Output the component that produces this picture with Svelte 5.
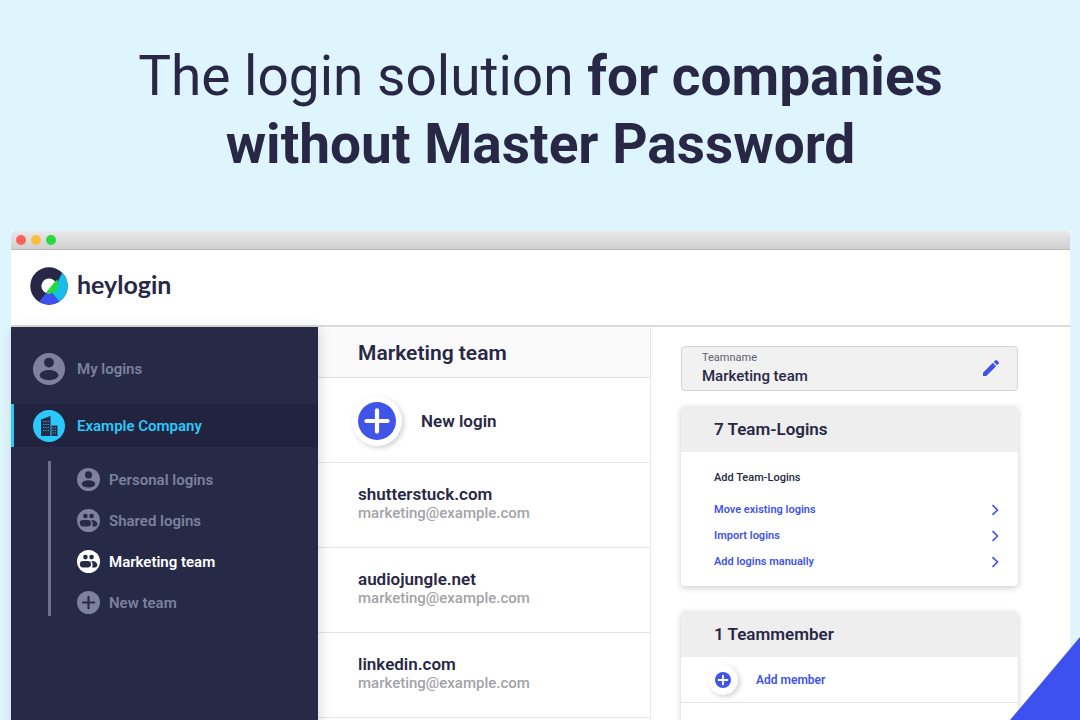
<script lang="ts">
	type IconName = 'person' | 'group' | 'plus';

	interface Team {
		label: string;
		icon: IconName;
		active?: boolean;
	}

	const teams: Team[] = [
		{ label: 'Personal logins', icon: 'person' },
		{ label: 'Shared logins', icon: 'group' },
		{ label: 'Marketing team', icon: 'group', active: true },
		{ label: 'New team', icon: 'plus' }
	];

	const logins = [
		{ site: 'shutterstuck.com', user: 'marketing@example.com' },
		{ site: 'audiojungle.net', user: 'marketing@example.com' },
		{ site: 'linkedin.com', user: 'marketing@example.com' }
	];

	const actions = ['Move existing logins', 'Import logins', 'Add logins manually'];

	let teamname = $state('Marketing team');
</script>

{#snippet icon(name: IconName)}
	<svg class="icon" viewBox="0 0 24 24" aria-hidden="true">
		<circle cx="12" cy="12" r="12" fill="currentColor" />
		{#if name === 'person'}
			<circle class="cut" cx="12" cy="7.2" r="3.7" />
			<ellipse class="cut" cx="12" cy="16.6" rx="7" ry="3.8" />
		{:else if name === 'group'}
			<circle class="cut" cx="8.8" cy="7.4" r="2.4" />
			<circle class="cut" cx="15.2" cy="7.4" r="2.4" />
			<rect class="cut" x="3" y="11.6" width="11.6" height="6.6" rx="3.3" />
			<path class="cut" d="M14.6 11.6c3.8 0 6.6 1.400 6.600 4 0 1.600-1 2.600-2.400 2.600h-3.200c.5-.8.7-1.700.7-2.700 0-1.600-.5-2.900-1.700-3.900z" />
		{:else}
			<path d="M12 6v12M6 12h12" stroke="#262a47" stroke-width="2.2" stroke-linecap="round" />
		{/if}
	</svg>
{/snippet}

{#snippet plus()}
	<svg viewBox="0 0 36 36" aria-hidden="true">
		<circle cx="18" cy="18" r="18" fill="#4154e8" />
		<path d="M18 8v20M8 18h20" stroke="#fff" stroke-width="4" stroke-linecap="round" />
	</svg>
{/snippet}

<div class="page">
	<h1>The login solution <b>for companies<br />without Master Password</b></h1>

	<div class="window">
		<div class="titlebar">
			<span class="dot red"></span>
			<span class="dot yellow"></span>
			<span class="dot green"></span>
		</div>

		<header>
			<svg class="logo" viewBox="0 0 38 38" aria-hidden="true">
				<circle cx="19" cy="19" r="18.7" fill="#282846" />
				<path d="M32.2 5.8A18.700 18.700 0 0 1 29.200 34.700L22 26z" fill="#18bdf0" />
				<path d="M29.200 34.700A18.700 18.700 0 0 1 9 34.800L15.800 26.200h6.600z" fill="#3d50f0" />
				<circle cx="19" cy="19" r="7.6" fill="#fff" />
				<path d="M26.600 12.600 15.600 26.300H23A9 9 0 0 0 26.600 12.600z" fill="#1fdc3f" />
			</svg>
			<span class="brand">heylogin</span>
		</header>

		<div class="columns">
			<nav>
				<a class="account" href="#my">
					{@render icon('person')}
					My logins
				</a>
				<a class="account active" href="#company">
					<svg class="icon" viewBox="0 0 32 32" aria-hidden="true">
						<circle cx="16" cy="16" r="16" fill="#2bc8fc" />
						<path d="M8 9.500 17.500 6v20H8zM18.500 15.500h6V26h-6z" fill="#262a47" />
						<path
							d="M10 11.500h6M10 14.500h6M10 17.500h6M10 20.500h6M19.500 18h4M19.500 20.500h4M19.500 23h4"
							stroke="#2bc8fc"
							stroke-width="0.8"
							stroke-dasharray="1.3 1"
						/>
					</svg>
					Example Company
				</a>
				<ul>
					{#each teams as team}
						<li>
							<a class:current={team.active} href="#team">
								{@render icon(team.icon)}
								{team.label}
							</a>
						</li>
					{/each}
				</ul>
			</nav>

			<main>
				<h2>Marketing team</h2>
				<button class="new-login">
					<span class="round">{@render plus()}</span>
					New login
				</button>
				{#each logins as login}
					<a class="login" href="#login">
						<strong>{login.site}</strong>
						<span>{login.user}</span>
					</a>
				{/each}
			</main>

			<aside>
				<div class="field">
					<div class="field-text">
						<label for="teamname">Teamname</label>
						<input id="teamname" type="text" bind:value={teamname} />
					</div>
					<button class="edit" aria-label="Edit">
						<svg viewBox="3 3 18 18" aria-hidden="true">
							<path
								fill="#4154e8"
								d="M3 17.250V21h3.750L17.810 9.940l-3.750-3.750L3 17.250zM20.710 7.040a1 1 0 0 0 0-1.410l-2.340-2.340a1 1 0 0 0-1.410 0l-1.830 1.830 3.750 3.750 1.830-1.830z"
							/>
						</svg>
					</button>
				</div>

				<section>
					<h3>7 Team-Logins</h3>
					<div class="actions">
						<h4>Add Team-Logins</h4>
						{#each actions as action}
							<a href="#action">
								{action}
								<svg viewBox="0 0 8 12" aria-hidden="true">
									<path d="M1.500 1.200 6.500 6l-5 4.800" fill="none" stroke="#4154e8" stroke-width="1.6" />
								</svg>
							</a>
						{/each}
					</div>
				</section>

				<section>
					<h3>1 Teammember</h3>
					<button class="add-member">
						<span class="round small">{@render plus()}</span>
						Add member
					</button>
					<div class="member"></div>
				</section>
			</aside>
		</div>
	</div>

	<div class="corner"></div>
</div>

<style>
	:global(body) {
		margin: 0;
	}

	.page {
		position: relative;
		display: flex;
		flex-direction: column;
		box-sizing: border-box;
		height: 100vh;
		padding: 42px 10px 0 11px;
		overflow: hidden;
		background: #dff5fe;
		color: #282846;
		font-family: Roboto, sans-serif;
	}

	h1,
	h2,
	h3,
	h4,
	ul {
		margin: 0;
		padding: 0;
	}

	a {
		color: inherit;
		text-decoration: none;
	}

	button {
		border: 0;
		background: none;
		color: inherit;
		font: inherit;
		cursor: pointer;
	}

	svg {
		display: block;
		flex: none;
	}

	h1 {
		margin-bottom: 53px;
		font-size: 55px;
		font-weight: 400;
		line-height: 68px;
		text-align: center;
	}

	.window {
		display: flex;
		flex: 1;
		flex-direction: column;
		background: #fff;
	}

	.titlebar {
		display: flex;
		align-items: center;
		gap: 5px;
		height: 18px;
		padding-left: 5px;
		border-bottom: 1px solid #b9b9b9;
		border-radius: 4px 4px 0 0;
		background: linear-gradient(#e8e8e8, #d0d0d0);
	}

	.dot {
		width: 10px;
		height: 10px;
		border-radius: 50%;
	}

	.red {
		background: #fa625c;
	}

	.yellow {
		background: #fbbe3c;
	}

	.green {
		background: #28d940;
	}

	header {
		display: flex;
		align-items: center;
		gap: 9px;
		height: 72px;
		padding: 0 19px 3px;
		border-bottom: 2px solid #dcdcdc;
	}

	.logo {
		width: 38px;
		height: 38px;
	}

	.brand {
		padding-bottom: 5px;
		font-family: Lato, sans-serif;
		font-size: 25px;
		font-weight: 700;
	}

	.columns {
		display: grid;
		flex: 1;
		grid-template-columns: 307px 333px 1fr;
	}

	nav {
		z-index: 1;
		padding-top: 7px;
		background: #262a47;
		box-shadow: 2px 2px 12px rgba(0, 0, 0, 0.15);
		color: #7c819c;
		font-size: 15px;
		font-weight: 600;
	}

	.cut {
		fill: #262a47;
	}

	.account {
		display: flex;
		align-items: center;
		gap: 12px;
		height: 43px;
		margin-bottom: 14px;
		padding: 0 19px;
		border-left: 3px solid transparent;
	}

	.account:first-child {
		margin-top: 13px;
	}

	.account .icon {
		width: 32px;
		height: 32px;
	}

	.account.active {
		border-color: #2bc8fc;
		background: #22233e;
		color: #2bc8fc;
	}

	ul {
		display: grid;
		gap: 18px;
		margin-left: 37px;
		padding: 7px 0 2px 26px;
		border-left: 3px solid #6c708a;
		list-style: none;
	}

	li a {
		display: flex;
		align-items: center;
		gap: 9px;
	}

	li .icon {
		width: 23px;
		height: 23px;
	}

	.current {
		color: #fff;
	}

	main {
		border-right: 1px solid #e6e6e6;
	}

	h2 {
		padding: 2px 0 0 40px;
		border-bottom: 1px solid #dedede;
		background: #fafafa;
		font-size: 21px;
		font-weight: 600;
		line-height: 48px;
	}

	.new-login {
		display: flex;
		align-items: center;
		gap: 19px;
		width: 100%;
		height: 85px;
		padding: 2px 34px 0;
		border-bottom: 1px solid #e6e6e6;
		font-size: 17px;
		font-weight: 600;
	}

	.round {
		display: grid;
		place-items: center;
		width: 50px;
		height: 50px;
		border-radius: 50%;
		background: #fff;
		box-shadow: 2px 2px 5px rgba(0, 0, 0, 0.18);
	}

	.round svg {
		width: 38px;
		height: 38px;
	}

	.round.small {
		width: 30px;
		height: 30px;
	}

	.round.small svg {
		width: 16px;
		height: 16px;
	}

	.login {
		display: flex;
		flex-direction: column;
		box-sizing: border-box;
		height: 85px;
		padding: 21px 40px;
		border-bottom: 1px solid #e6e6e6;
	}

	.login strong {
		font-size: 17px;
		font-weight: 600;
		line-height: 20px;
	}

	.login span {
		color: #a3a3a8;
		font-size: 15px;
		font-weight: 500;
		line-height: 18px;
	}

	aside {
		display: flex;
		flex-direction: column;
		gap: 25px;
		padding: 19px 52px 0 30px;
	}

	.field {
		display: flex;
		align-items: center;
		justify-content: space-between;
		box-sizing: border-box;
		height: 45px;
		margin-bottom: -10px;
		padding: 0 18px 2px 20px;
		border: 1px solid #d4d4d4;
		border-radius: 4px;
		background: #f1f1f1;
	}

	.field-text {
		display: flex;
		flex: 1;
		flex-direction: column;
	}

	label {
		color: #5c5e74;
		font-size: 11px;
		line-height: 16px;
	}

	input {
		width: 100%;
		padding: 0;
		border: 0;
		background: none;
		color: inherit;
		font: 500 15px/20px Roboto, sans-serif;
	}

	.edit {
		padding: 0;
	}

	.edit svg {
		width: 16px;
		height: 16px;
	}

	section {
		border-radius: 4px;
		background: #fff;
		box-shadow: 0 2px 6px rgba(0, 0, 0, 0.2);
	}

	h3 {
		padding-left: 33px;
		border-radius: 4px 4px 0 0;
		background: #eee;
		font-size: 17px;
		font-weight: 600;
		line-height: 46px;
	}

	.actions {
		padding: 16px 19px 11px 33px;
		font-size: 11px;
		font-weight: 600;
	}

	h4 {
		margin-bottom: 9px;
		font-size: 11px;
		font-weight: 500;
		line-height: 20px;
	}

	.actions a {
		display: flex;
		align-items: center;
		justify-content: space-between;
		color: #4154e8;
		line-height: 26px;
	}

	.actions svg {
		width: 8px;
		height: 12px;
	}

	.add-member {
		display: flex;
		align-items: center;
		gap: 18px;
		width: 100%;
		height: 46px;
		padding: 0 27px;
		border-bottom: 1px solid #e6e6e6;
		color: #4154e8;
		font-size: 12px;
		font-weight: 600;
	}

	.member {
		height: 46px;
	}

	.corner {
		position: absolute;
		right: 0;
		bottom: 0;
		width: 70px;
		height: 83px;
		background: #3d50f0;
		clip-path: polygon(100% 0, 100% 100%, 0 100%);
	}
</style>
